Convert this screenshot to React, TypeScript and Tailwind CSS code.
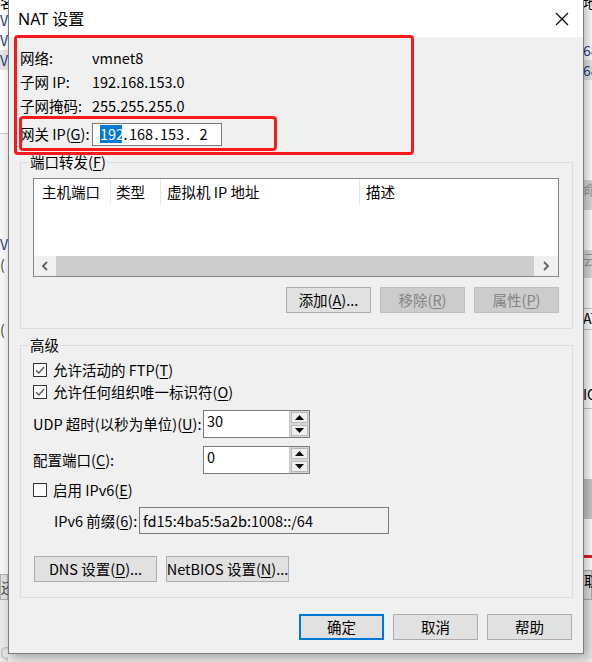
import React from 'react';

const cjk = "font-['Noto_Sans_CJK_SC',sans-serif]";

function U({ c }: { c: string }) {
  return <span className="underline decoration-1 underline-offset-[2px]">{c}</span>;
}

function Btn({
  children,
  w,
  kind = 'normal',
}: {
  children: React.ReactNode;
  w: string;
  kind?: 'normal' | 'disabled' | 'primary';
}) {
  const look =
    kind === 'disabled'
      ? 'border border-[#bfbfbf] bg-[#cccccc] text-[#838383]'
      : kind === 'primary'
        ? 'border-2 border-[#0078d7] bg-[#e1e1e1] text-black'
        : 'border border-[#adadad] bg-[#e1e1e1] text-black';
  return (
    <div className={`flex h-[26px] shrink-0 items-center justify-center whitespace-nowrap ${w} ${look}`}>
      {children}
    </div>
  );
}

function Check({ checked }: { checked?: boolean }) {
  return (
    <div className="flex h-[14px] w-[14px] shrink-0 items-center justify-center border border-[#333333] bg-white">
      {checked && (
        <svg width="12" height="12" viewBox="0 0 12 12">
          <path d="M2 6.2 L4.8 9 L10.2 3" fill="none" stroke="#555555" strokeWidth="1.3" />
        </svg>
      )}
    </div>
  );
}

function Spin({ value }: { value: string }) {
  return (
    <div className="flex h-[28px] w-[107px] shrink-0 border border-[#7a7a7a] bg-white">
      <div className="flex-1 pl-[3px] pt-[1px] leading-[18px]">{value}</div>
      <div className="flex w-[20px] flex-col gap-[2px] border-l border-[#c8c8c8] bg-[#d6d6d6] p-[1px]">
        <div className="flex flex-1 items-center justify-center border border-[#b9b9b9] bg-[#efefef]">
          <svg width="9" height="5" viewBox="0 0 9 5">
            <path d="M0 5 L4.5 0 L9 5 Z" fill="#000" />
          </svg>
        </div>
        <div className="flex flex-1 items-center justify-center border border-[#b9b9b9] bg-[#efefef]">
          <svg width="9" height="5" viewBox="0 0 9 5">
            <path d="M0 0 L9 0 L4.5 5 Z" fill="#000" />
          </svg>
        </div>
      </div>
    </div>
  );
}

function InfoRow({ label, value }: { label: React.ReactNode; value: string }) {
  return (
    <div className="flex h-[24px] items-center">
      <div className="w-[72px]">{label}</div>
      <div>{value}</div>
    </div>
  );
}

function Background() {
  return (
    <div className="flex h-full justify-between bg-[#ececec] text-[14px]">
      <div className="flex w-[8px] flex-col overflow-hidden bg-white">
        <div className="-mt-[6px] h-[16px] leading-[16px] text-black">名</div>
        <div className="h-[20px] leading-[20px] text-[#1b3e86]">V</div>
        <div className="h-[20px] leading-[20px] text-[#1b3e86]">V</div>
        <div className="h-[20px] bg-[#e5e5e5] leading-[20px] text-[#1b3e86]">V</div>
        <div className="h-[75px] border-b border-[#c8c8c8]" />
        <div className="flex flex-1 flex-col bg-[#f7f7f7] text-[#444]">
          <div className="mt-[100px] h-[20px] leading-[20px] text-[#1b3e86]">V</div>
          <div className="h-[20px] leading-[20px]">(</div>
          <div className="mt-[45px] h-[20px] leading-[20px]">(</div>
          <div className="mt-[235px] h-[26px] border border-[#adadad] bg-[#e1e1e1] leading-[24px]">还</div>
        </div>
        <div className="h-[62px] bg-[#e9e9e9] pt-[42px] text-[16px] leading-[20px] text-[#c4c4c4]">Q</div>
      </div>
      <div className="flex w-[9px] flex-col overflow-hidden bg-white text-[14px]">
        <div className="-mt-[6px] h-[16px] leading-[16px] text-black">地</div>
        <div className="mt-[30px] h-[20px] leading-[20px] text-[#1b3e86]">68</div>
        <div className="h-[20px] bg-[#e5e5e5] leading-[20px] text-[#1b3e86]">68</div>
        <div className="mt-[100px] h-[30px] bg-[#d9d9d9] text-[#999]">命</div>
        <div className="mt-[40px] h-[28px] bg-[#d9d9d9] text-[#999]">云</div>
        <div className="mt-[30px] h-[22px] border-y border-[#c8c8c8] text-black">AT</div>
        <div className="mt-[55px] h-[24px] border-b border-[#c8c8c8] text-black">IC</div>
        <div className="mt-[70px] h-[40px] bg-[#c8c8c8]" />
        <div className="mt-[36px] h-[3px] bg-[#e02020]" />
        <div className="mt-[12px] h-[30px] border border-[#adadad] bg-[#e1e1e1] text-black">取</div>
        <div className="flex-1 bg-[#e6e6e6]" />
      </div>
    </div>
  );
}

export default function App() {
  return (
    <div className={`relative h-[662px] w-[592px] overflow-hidden ${cjk} text-[14.5px] leading-[18px] text-black`}>
      <Background />

      <div className="absolute left-[8px] top-0 flex h-[654px] w-[576px] flex-col border-x border-b border-[#7d7d7d] bg-[#f0f0f0] shadow-[3px_4px_10px_rgba(0,0,0,0.3)]">
        {/* title bar */}
        <div className="flex h-[37px] shrink-0 items-center justify-between bg-white pl-[9px] pr-[14px]">
          <div className="font-['Noto_Sans','Noto_Sans_CJK_SC',sans-serif] text-[16px]">NAT 设置</div>
          <svg width="14" height="14" viewBox="0 0 14 14">
            <path d="M1 1 L13 13 M13 1 L1 13" stroke="#000" strokeWidth="1.1" />
          </svg>
        </div>

        {/* body */}
        <div className="flex flex-1 flex-col pl-[11px] pt-[9px]">
          <InfoRow label="网络:" value="vmnet8" />
          <InfoRow label="子网 IP:" value="192.168.153.0" />
          <InfoRow label="子网掩码:" value="255.255.255.0" />
          <div className="mt-[4px] flex h-[24px] items-center">
            <div className="w-[72px] whitespace-nowrap">
              网关 IP(<U c="G" />):
            </div>
            <div className="flex h-[23px] w-[130px] items-center border border-[#7a7a7a] bg-white pl-[7px]">
              <span className="w-[22px] bg-[#0078d7] text-center text-white">192</span>
              <span className="w-[7px] text-center">.</span>
              <span className="w-[24px] text-center">168</span>
              <span className="w-[7px] text-center">.</span>
              <span className="w-[24px] text-center">153</span>
              <span className="w-[8px] text-center">.</span>
              <span className="w-[23px] text-center">2</span>
            </div>
          </div>

          {/* port forwarding */}
          <fieldset className="mt-[7px] w-[553px] border border-[#dcdcdc] pb-[15px]">
            <legend className="ml-[8px] px-[1px] leading-[18px]">
              端口转发(<U c="F" />)
            </legend>
            <div className="ml-[12px] mt-[7px] flex h-[99px] w-[526px] flex-col border border-[#828790] bg-white">
              <div className="flex h-[25px] shrink-0 items-center">
                <div className="flex h-full w-[77px] items-center border-r border-[#e5e5e5] pl-[8px]">主机端口</div>
                <div className="flex h-full w-[50px] items-center border-r border-[#e5e5e5] pl-[5px]">类型</div>
                <div className="flex h-full w-[199px] items-center border-r border-[#e5e5e5] pl-[6px]">虚拟机 IP 地址</div>
                <div className="flex h-full items-center pl-[6px]">描述</div>
              </div>
              <div className="flex-1" />
              <div className="flex h-[20px] shrink-0 bg-[#f0f0f0]">
                <div className="flex w-[22px] items-center justify-center">
                  <svg width="8" height="10" viewBox="0 0 8 10">
                    <path d="M6 1 L2 5 L6 9" fill="none" stroke="#606060" strokeWidth="1.8" />
                  </svg>
                </div>
                <div className="flex-1 bg-[#cdcdcd]" />
                <div className="flex w-[24px] items-center justify-center">
                  <svg width="8" height="10" viewBox="0 0 8 10">
                    <path d="M2 1 L6 5 L2 9" fill="none" stroke="#606060" strokeWidth="1.8" />
                  </svg>
                </div>
              </div>
            </div>
            <div className="mt-[10px] flex justify-end gap-[9px] pr-[13px]">
              <Btn w="w-[85px]">
                添加(<U c="A" />)...
              </Btn>
              <Btn w="w-[85px]" kind="disabled">
                移除(<U c="R" />)
              </Btn>
              <Btn w="w-[85px]" kind="disabled">
                属性(<U c="P" />)
              </Btn>
            </div>
          </fieldset>

          {/* advanced */}
          <fieldset className="mt-[7px] w-[553px] border border-[#dcdcdc] pb-[15px] pl-[12px]">
            <legend className="ml-[-4px] px-[1px] leading-[18px]">高级</legend>
            <div className="mt-[5px] flex h-[22px] items-center gap-[6px]">
              <Check checked />
              <span>
                允许活动的 FTP(<U c="T" />)
              </span>
            </div>
            <div className="flex h-[22px] items-center gap-[6px]">
              <Check checked />
              <span>
                允许任何组织唯一标识符(<U c="O" />)
              </span>
            </div>
            <div className="mt-[7px] flex h-[28px] items-center">
              <div className="w-[170px] whitespace-nowrap">
                UDP 超时(以秒为单位)(<U c="U" />):
              </div>
              <Spin value="30" />
            </div>
            <div className="mt-[8px] flex h-[28px] items-center">
              <div className="w-[170px]">
                配置端口(<U c="C" />):
              </div>
              <Spin value="0" />
            </div>
            <div className="mt-[5px] flex h-[22px] items-center gap-[6px]">
              <Check />
              <span>
                启用 IPv6(<U c="E" />)
              </span>
            </div>
            <div className="mt-[6px] flex h-[27px] items-center pl-[21px]">
              <div className="w-[85px] whitespace-nowrap">
                IPv6 前缀(<U c="6" />):
              </div>
              <div className="flex h-[27px] w-[250px] items-center border border-[#7a7a7a] bg-[#f0f0f0] pl-[3px]">
                fd15:4ba5:5a2b:1008::/64
              </div>
            </div>
            <div className="ml-[1px] mt-[22px] flex gap-[9px]">
              <Btn w="w-[123px]">
                DNS 设置(<U c="D" />)...
              </Btn>
              <Btn w="w-[123px]">
                NetBIOS 设置(<U c="N" />)...
              </Btn>
            </div>
          </fieldset>

          {/* footer */}
          <div className="mt-[16px] flex justify-end gap-[9px] pr-[11px]">
            <Btn w="w-[85px]" kind="primary">
              确定
            </Btn>
            <Btn w="w-[85px]">取消</Btn>
            <Btn w="w-[85px]">帮助</Btn>
          </div>
        </div>

        {/* red annotation frames */}
        <div className="pointer-events-none absolute left-[5px] top-[35px] h-[120px] w-[400px] rounded-[4px] border-[3px] border-[#f91b1b]" />
        <div className="pointer-events-none absolute left-[10px] top-[116px] h-[35px] w-[258px] rounded-[4px] border-[3px] border-[#f91b1b]" />
      </div>
    </div>
  );
}
